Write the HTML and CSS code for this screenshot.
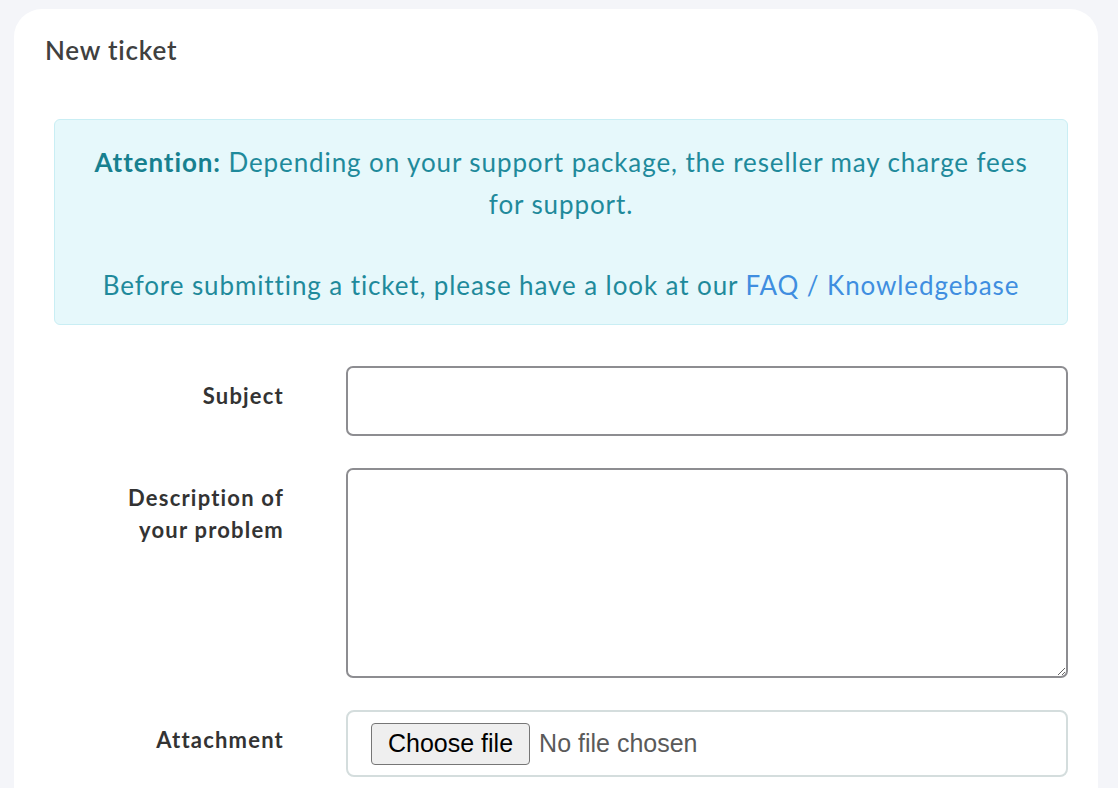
FILE: index.html
```html
<!DOCTYPE html>
<html lang="en">
<head>
<meta charset="utf-8">
<title>New ticket</title>
<link rel="stylesheet" href="styles.css">
</head>
<body>
<div class="card">
  <div class="card-header">
    <h2 class="card-title">New ticket</h2>
  </div>
  <div class="card-body">
    <div class="alert">
      <p><strong>Attention:</strong> Depending on your support package, the reseller may charge fees for support.</p>
      <p class="spacer">&nbsp;</p>
      <p>Before submitting a ticket, please have a look at our <a href="#">FAQ / Knowledgebase</a></p>
    </div>
    <form class="form">
      <label class="label" for="subject">Subject</label>
      <input class="input" id="subject" type="text">
      <label class="label" for="desc">Description of<br>your problem</label>
      <textarea class="input textarea" id="desc"></textarea>
      <label class="label">Attachment</label>
      <div class="filebox">
        <button type="button" class="filebtn">Choose file</button>
        <span class="filename">No file chosen</span>
      </div>
    </form>
  </div>
</div>
</body>
</html>
```
FILE: styles.css
```css
html, body {
  margin: 0;
  padding: 0;
}
body {
  background: #f4f5f9;
  padding: 9px 20px 0 14px;
  font-family: Lato, "Open Sans", sans-serif;
  height: 788px;
  box-sizing: border-box;
  overflow: hidden;
}
.card {
  background: #ffffff;
  border-radius: 28px 28px 0 0;
  min-height: 820px;
}
.card-header {
  padding: 26px 31px 0 31px;
}
.card-title {
  margin: 0;
  font-size: 26px;
  line-height: 30px;
  font-weight: 600;
  letter-spacing: 0.8px;
  color: #404040;
}
.card-body {
  padding: 54px 30px 0 40px;
}
.alert {
  background: #e6f8fb;
  border: 1px solid #c9eef4;
  border-radius: 6px;
  padding: 21px 30px 18px;
  text-align: center;
  color: #1f8a9b;
  font-size: 26px;
  line-height: 42px;
  letter-spacing: 0.9px;
}
.alert p {
  margin: 0;
}
.alert .spacer {
  line-height: 39px;
}
.alert strong {
  font-weight: 700;
  color: #17808f;
}
.alert a {
  color: #3f8ee0;
  text-decoration: none;
}
.form {
  margin-top: 41px;
  display: grid;
  grid-template-columns: 230px 1fr;
  column-gap: 62px;
  row-gap: 32px;
}
.label {
  text-align: right;
  font-size: 22px;
  line-height: 32px;
  font-weight: 700;
  letter-spacing: 1.2px;
  color: #333333;
  padding-top: 14px;
}
.input {
  box-sizing: border-box;
  height: 70px;
  border: 2px solid #8d8d91;
  border-radius: 7px;
  background: #fff;
  font-family: inherit;
  font-size: 22px;
  margin: 0;
}
.textarea {
  height: 210px;
  resize: vertical;
  display: block;
}
.filebox {
  box-sizing: border-box;
  height: 67px;
  border: 2px solid #d4dddd;
  border-radius: 8px;
  display: flex;
  align-items: center;
  padding-left: 23px;
  gap: 9px;
}
.filebtn {
  font-family: "Liberation Sans", Arial, sans-serif;
  font-size: 25px;
  height: 42px;
  padding: 0 16px;
  background: #efefef;
  border: 1px solid #767676;
  border-radius: 4px;
  color: #000;
}
.filename {
  font-family: "Liberation Sans", Arial, sans-serif;
  font-size: 25px;
  color: #5a5a5a;
}
```
